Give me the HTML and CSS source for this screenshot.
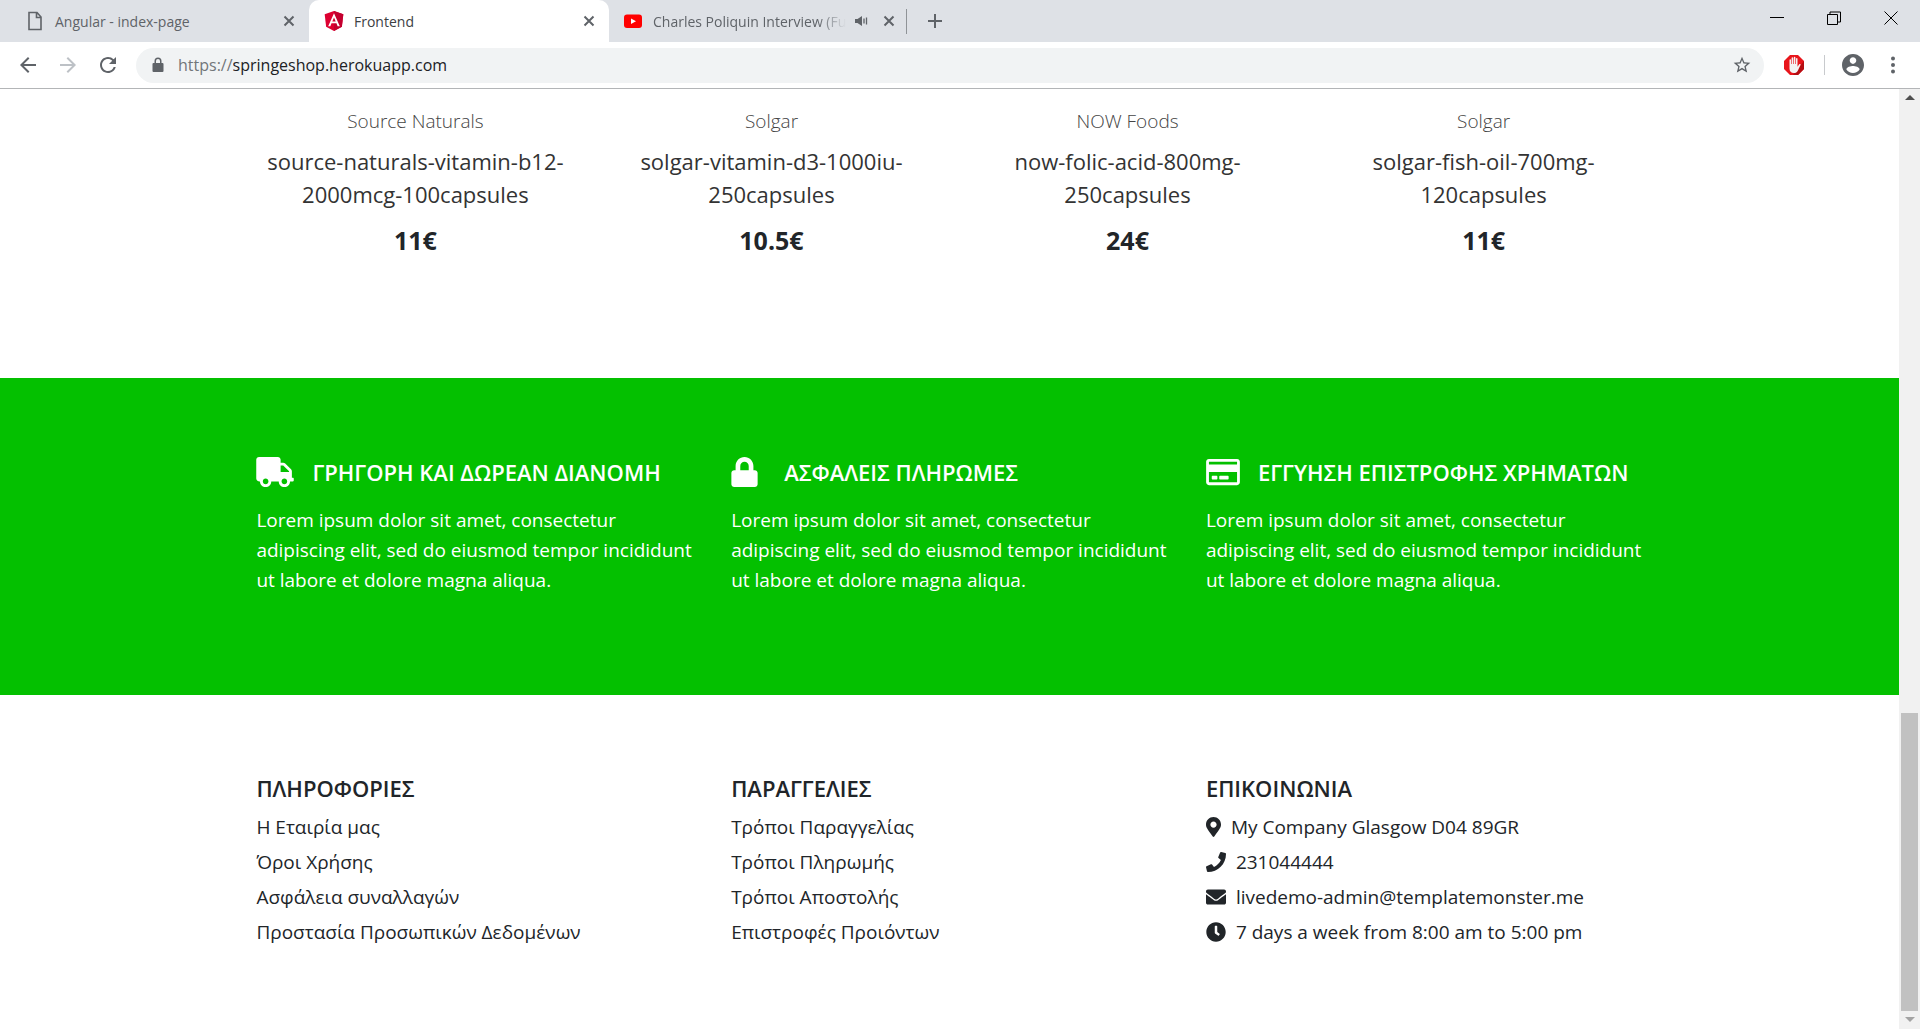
FILE: index.html
```html
<!DOCTYPE html>
<html lang="el">
<head>
<meta charset="utf-8">
<meta name="viewport" content="width=device-width, initial-scale=1">
<title>Frontend</title>
<link rel="stylesheet" href="styles.css">
</head>
<body>
<header class="browser">
  <div class="tabstrip">
    <div class="tab tab-first">
      <svg class="favicon" viewBox="0 0 20 20" fill="none" stroke="#5f6368" stroke-width="1.6"><path d="M4 1.5h8l4 4.5v12.500H4zM11.500 1.500V6.500H16"/></svg>
      <span class="tab-title">Angular - index-page</span>
      <button class="tab-close" aria-label="Close tab"><svg viewBox="0 0 12 12"><path d="M1.500 1.500l9 9M10.500 1.500l-9 9"/></svg></button>
    </div>
    <div class="tab tab-active">
      <svg class="favicon" viewBox="25 30 200 200"><path fill="#dd0031" d="M125 30 31.900 63.200l14.200 123.100L125 230l78.900-43.700 14.200-123.100z"/><path fill="#c3002f" d="M125 30v200l78.900-43.700 14.200-123.100z"/><path fill="#fff" d="M125 52.100L66.800 182.600h21.700l11.700-29.200h49.400l11.700 29.200H183L125 52.100zm17 83.300h-34l17-40.900 17 40.900z"/></svg>
      <span class="tab-title">Frontend</span>
      <button class="tab-close" aria-label="Close tab"><svg viewBox="0 0 12 12"><path d="M1.500 1.500l9 9M10.500 1.500l-9 9"/></svg></button>
    </div>
    <div class="tab tab-last">
      <svg class="favicon" viewBox="0 0 20 20"><rect x="1" y="3.500" width="18" height="13.500" rx="3" fill="#f00"/><path fill="#fff" d="M8 7.500l5 2.700-5 2.800z"/></svg>
      <span class="tab-title fade">Charles Poliquin Interview (Fu</span>
      <svg class="speaker" viewBox="0 0 14 14"><path fill="#5f6368" d="M1 5h2.500L8 2v10L3.500 9H1z"/><path stroke="#5f6368" stroke-width="1.300" d="M10 4.500v5M12.500 3.500v7"/></svg>
      <button class="tab-close" aria-label="Close tab"><svg viewBox="0 0 12 12"><path d="M1.500 1.500l9 9M10.500 1.500l-9 9"/></svg></button>
    </div>
    <button class="new-tab" aria-label="New tab"><svg viewBox="0 0 16 16"><path d="M8 1v14M1 8h14"/></svg></button>
    <div class="window-controls">
      <button aria-label="Minimize"><svg viewBox="0 0 14 14"><path d="M0 6.500h14"/></svg></button>
      <button aria-label="Restore"><svg viewBox="0 0 14 14"><path d="M.5 3.500h10v10H.5zM3 3.500V1h10.500v10H11"/></svg></button>
      <button aria-label="Close"><svg viewBox="0 0 14 14"><path d="M.5 .5l13 13M13.500 .5l-13 13"/></svg></button>
    </div>
  </div>
  <div class="toolbar">
    <button class="tool" aria-label="Back"><svg viewBox="0 0 24 24"><path d="M20 11H7.830l5.590-5.590L12 4l-8 8 8 8 1.410-1.410L7.830 13H20v-2z"/></svg></button>
    <button class="tool tool-disabled" aria-label="Forward" disabled><svg viewBox="0 0 24 24"><path d="M12 4l-1.410 1.410L16.170 11H4v2h12.170l-5.580 5.590L12 20l8-8z"/></svg></button>
    <button class="tool" aria-label="Reload"><svg viewBox="0 0 24 24"><path d="M17.650 6.350A7.958 7.958 0 0 0 12 4c-4.420 0-7.990 3.580-7.990 8s3.570 8 7.990 8c3.730 0 6.840-2.550 7.730-6h-2.080A5.990 5.990 0 0 1 12 18c-3.310 0-6-2.690-6-6s2.690-6 6-6c1.660 0 3.140.690 4.220 1.780L13 11h7V4l-2.350 2.350z"/></svg></button>
    <div class="omnibox">
      <svg class="url-lock" viewBox="0 0 12 16"><path fill="#5f6368" d="M1.500 6H2.500V4a3.500 3.500 0 0 1 7 0v2h1a1 1 0 0 1 1 1v7a1 1 0 0 1-1 1h-9a1 1 0 0 1-1-1V7a1 1 0 0 1 1-1zM4 6h4V4a2 2 0 0 0-4 0z"/></svg>
      <label class="scheme" for="url">https://</label>
      <input class="url" id="url" type="text" value="springeshop.herokuapp.com">
      <button class="star" aria-label="Bookmark"><svg viewBox="0 0 24 24"><path fill="#5f6368" d="M22 9.240l-7.190-.620L12 2 9.190 8.630 2 9.240l5.460 4.730L5.820 21 12 17.270 18.180 21l-1.630-7.030L22 9.240zM12 15.400l-3.760 2.270 1-4.280-3.320-2.880 4.380-.380L12 6.100l1.710 4.040 4.380.380-3.320 2.880 1 4.280L12 15.400z"/></svg></button>
    </div>
    <button class="extension" aria-label="Ad blocker"><svg viewBox="0 0 20 20"><path fill="#e8151b" d="M6 0h8l6 6v8l-6 6H6l-6-6V6z"/><path fill="#b50d12" d="M20 6v8l-6 6H9l7-9z"/><path fill="#f4f4f4" d="M5.500 5c0-1 1.500-1 1.500 0v4h.6V3c0-1 1.600-1 1.600 0v6h.6V2.500c0-1 1.600-1 1.600 0V9h.6V3.800c0-1 1.500-1 1.500 0v8l1.700-2.500c.7-.8 1.700-.2 1.300.7l-2.600 5.500c-1 2-2.200 2.500-4 2.500-2.800 0-4.400-1.600-4.400-4.500z"/></svg></button>
    <span class="divider"></span>
    <button class="avatar" aria-label="Profile"><svg viewBox="2 2 20 20"><path fill="#5f6368" d="M12 2C6.480 2 2 6.480 2 12s4.480 10 10 10 10-4.480 10-10S17.520 2 12 2zm0 3c1.660 0 3 1.340 3 3s-1.340 3-3 3-3-1.340-3-3 1.340-3 3-3zm0 14.200c-2.500 0-4.710-1.280-6-3.220.030-1.990 4-3.080 6-3.080 1.990 0 5.970 1.090 6 3.080-1.290 1.940-3.500 3.220-6 3.220z"/></svg></button>
    <button class="menu" aria-label="Menu"><svg viewBox="0 0 4 18"><g fill="#5f6368"><circle cx="2" cy="2.500" r="2"/><circle cx="2" cy="9" r="2"/><circle cx="2" cy="15.500" r="2"/></g></svg></button>
  </div>
</header>

<div class="viewport">
  <div class="page">
    <main>
      <section class="products container">
        <article class="product"><p class="brand">Source Naturals</p><h3 class="name">source-naturals-vitamin-b12-<br>2000mcg-100capsules</h3><p class="price">11€</p></article>
        <article class="product"><p class="brand">Solgar</p><h3 class="name">solgar-vitamin-d3-1000iu-<br>250capsules</h3><p class="price">10.5€</p></article>
        <article class="product"><p class="brand">NOW Foods</p><h3 class="name">now-folic-acid-800mg-<br>250capsules</h3><p class="price">24€</p></article>
        <article class="product"><p class="brand">Solgar</p><h3 class="name">solgar-fish-oil-700mg-<br>120capsules</h3><p class="price">11€</p></article>
      </section>
      <section class="benefits">
        <div class="container columns">
          <article class="column">
            <h4 class="benefit-title"><svg class="icon-truck" viewBox="0 0 640 512"><path d="M624 352h-16V243.900c0-12.700-5.100-24.900-14.100-33.900L494 110.100c-9-9-21.200-14.100-33.900-14.100H416V48c0-26.500-21.500-48-48-48H48C21.500 0 0 21.500 0 48v320c0 26.500 21.500 48 48 48h16c0 53 43 96 96 96s96-43 96-96h128c0 53 43 96 96 96s96-43 96-96h48c8.800 0 16-7.200 16-16v-32c0-8.800-7.200-16-16-16zM160 464c-26.500 0-48-21.500-48-48s21.500-48 48-48 48 21.500 48 48-21.500 48-48 48zm320 0c-26.500 0-48-21.500-48-48s21.500-48 48-48 48 21.500 48 48-21.500 48-48 48zm80-208H416V144h44.100l99.900 99.900V256z"/></svg>ΓΡΗΓΟΡΗ ΚΑΙ ΔΩΡΕΑΝ ΔΙΑΝΟΜΗ</h4>
            <p class="benefit-text">Lorem ipsum dolor sit amet, consectetur<br>adipiscing elit, sed do eiusmod tempor incididunt<br>ut labore et dolore magna aliqua.</p>
          </article>
          <article class="column">
            <h4 class="benefit-title"><svg class="icon-lock" viewBox="0 0 448 512"><path d="M400 224h-24v-72C376 68.200 307.800 0 224 0S72 68.200 72 152v72H48c-26.500 0-48 21.500-48 48v192c0 26.500 21.500 48 48 48h352c26.500 0 48-21.500 48-48V272c0-26.500-21.500-48-48-48zm-104 0H152v-72c0-39.700 32.300-72 72-72s72 32.300 72 72v72z"/></svg>ΑΣΦΑΛΕΙΣ ΠΛΗΡΩΜΕΣ</h4>
            <p class="benefit-text">Lorem ipsum dolor sit amet, consectetur<br>adipiscing elit, sed do eiusmod tempor incididunt<br>ut labore et dolore magna aliqua.</p>
          </article>
          <article class="column">
            <h4 class="benefit-title"><svg class="icon-card" viewBox="0 0 576 512"><path d="M527.900 32H48.100C21.500 32 0 53.500 0 80v352c0 26.500 21.500 48 48.100 48h479.800c26.600 0 48.100-21.500 48.100-48V80c0-26.500-21.500-48-48.100-48zM54.100 80h467.800c3.300 0 6 2.700 6 6v42H48.100V86c0-3.300 2.700-6 6-6zm467.800 352H54.100c-3.300 0-6-2.700-6-6V256h479.800v170c0 3.300-2.700 6-6 6zM192 332v40c0 6.600-5.400 12-12 12h-72c-6.600 0-12-5.400-12-12v-40c0-6.600 5.400-12 12-12h72c6.600 0 12 5.400 12 12zm192 0v40c0 6.600-5.400 12-12 12H236c-6.600 0-12-5.400-12-12v-40c0-6.600 5.400-12 12-12h136c6.600 0 12 5.400 12 12z"/></svg>ΕΓΓΥΗΣΗ ΕΠΙΣΤΡΟΦΗΣ ΧΡΗΜΑΤΩΝ</h4>
            <p class="benefit-text">Lorem ipsum dolor sit amet, consectetur<br>adipiscing elit, sed do eiusmod tempor incididunt<br>ut labore et dolore magna aliqua.</p>
          </article>
        </div>
      </section>
    </main>
    <footer class="footer container columns">
      <nav class="column">
        <h4 class="footer-title">ΠΛΗΡΟΦΟΡΙΕΣ</h4>
        <ul class="links">
          <li><a href="#">Η Εταιρία μας</a></li>
          <li><a href="#">Όροι Χρήσης</a></li>
          <li><a href="#">Ασφάλεια συναλλαγών</a></li>
          <li><a href="#">Προστασία Προσωπικών Δεδομένων</a></li>
        </ul>
      </nav>
      <nav class="column">
        <h4 class="footer-title">ΠΑΡΑΓΓΕΛΙΕΣ</h4>
        <ul class="links">
          <li><a href="#">Τρόποι Παραγγελίας</a></li>
          <li><a href="#">Τρόποι Πληρωμής</a></li>
          <li><a href="#">Τρόποι Αποστολής</a></li>
          <li><a href="#">Επιστροφές Προιόντων</a></li>
        </ul>
      </nav>
      <div class="column">
        <h4 class="footer-title">ΕΠΙΚΟΙΝΩΝΙΑ</h4>
        <ul class="links">
          <li><svg class="icon-pin" viewBox="0 0 384 512"><path d="M172.268 501.670C26.970 291.031 0 269.413 0 192 0 85.961 85.961 0 192 0s192 85.961 192 192c0 77.413-26.970 99.031-172.268 309.670-9.535 13.774-29.930 13.773-39.464 0zM192 272c44.183 0 80-35.817 80-80s-35.817-80-80-80-80 35.817-80 80 35.817 80 80 80z"/></svg>My Company Glasgow D04 89GR</li>
          <li><svg class="icon-contact" viewBox="0 0 512 512"><path d="M493.400 24.600l-104-24c-11.300-2.600-22.900 3.300-27.500 13.900l-48 112c-4.200 9.800-1.400 21.300 6.900 28l60.600 49.600c-36 76.700-98.900 140.500-177.200 177.200l-49.600-60.600c-6.800-8.300-18.200-11.100-28-6.900l-112 48C3.900 366.500-2 378.100.6 389.400l24 104C27.100 504.200 36.700 512 48 512c256.100 0 464-207.500 464-464 0-11.200-7.700-20.900-18.600-23.400z"/></svg>231044444</li>
          <li><svg class="icon-contact" viewBox="0 0 512 512"><path d="M502.300 190.800c3.900-3.100 9.700-.2 9.700 4.700V400c0 26.500-21.500 48-48 48H48c-26.500 0-48-21.500-48-48V195.600c0-5 5.700-7.800 9.700-4.700 22.400 17.400 52.100 39.500 154.100 113.600 21.100 15.400 56.700 47.800 92.200 47.600 35.700.3 72-32.800 92.300-47.600 102-74.100 131.600-96.300 154-113.700zM256 320c23.200.4 56.600-29.200 73.400-41.400 132.700-96.300 142.800-104.700 173.400-128.700 5.800-4.500 9.200-11.500 9.200-18.900v-19c0-26.500-21.500-48-48-48H48c-26.500 0-48 21.500-48 48v19c0 7.400 3.400 14.300 9.200 18.900 30.600 23.900 40.700 32.400 173.400 128.700 16.800 12.200 50.200 41.800 73.400 41.400z"/></svg><a href="#">livedemo-admin@templatemonster.me</a></li>
          <li><svg class="icon-contact" viewBox="0 0 512 512"><path d="M256 8C119 8 8 119 8 256s111 248 248 248 248-111 248-248S393 8 256 8zm92.490 313l-20 25a16 16 0 0 1-22.490 2.500l-67-49.720a40 40 0 0 1-15-31.230V112a16 16 0 0 1 16-16h32a16 16 0 0 1 16 16v144l58 42.500a16 16 0 0 1 2.490 22.500z"/></svg>7 days a week from 8:00 am to 5:00 pm</li>
        </ul>
      </div>
    </footer>
  </div>
  <div class="scrollbar">
    <button class="scroll-arrow" aria-label="Scroll up"><svg viewBox="0 0 10 6"><path fill="#505050" d="M5 0l5 5H0z"/></svg></button>
    <div class="scroll-track"><div class="scroll-thumb"></div></div>
    <button class="scroll-arrow" aria-label="Scroll down"><svg viewBox="0 0 10 6"><path fill="#a3a3a3" d="M0 0h10L5 5z"/></svg></button>
  </div>
</div>
</body>
</html>
```
FILE: styles.css
```css
* { box-sizing: border-box; }
body {
  margin: 0;
  min-height: 100vh;
  display: flex;
  flex-direction: column;
  background: #fff;
  color: #212529;
  font-family: "Open Sans", "Noto Sans", sans-serif;
}
p, h3, h4, ul { margin: 0; padding: 0; }
ul { list-style: none; }
a { color: inherit; text-decoration: none; }
svg { display: block; flex: none; }
button {
  display: flex;
  align-items: center;
  justify-content: center;
  flex: none;
  margin: 0;
  padding: 0;
  border: 0;
  background: none;
}

/* Browser frame */
.browser { border-bottom: 1px solid #b3b5b7; }
.tabstrip {
  display: flex;
  height: 42px;
  background: #dee1e6;
}
.tab {
  display: flex;
  align-items: center;
  color: #5f6368;
  font-size: 14px;
  padding: 0 11px;
}
.tab-first { width: 309px; padding-left: 25px; }
.tab-active {
  width: 300px;
  padding-left: 15px;
  background: #fff;
  border-radius: 10px 10px 0 0;
  color: #3c4043;
}
.tab-last { width: 298px; padding-left: 14px; position: relative; }
.tab-last::after {
  content: "";
  position: absolute;
  right: 0;
  top: 9px;
  width: 1px;
  height: 25px;
  background: #8f9397;
}
.favicon { width: 20px; height: 20px; margin-right: 10px; }
.tab-title { flex: 1; white-space: nowrap; }
.fade { mask-image: linear-gradient(to right, #000 85%, transparent); }
.speaker { width: 14px; height: 14px; margin: 0 12px 0 8px; }
.tab-close { width: 18px; height: 18px; }
.tab-close svg { width: 12px; height: 12px; stroke: #5f6368; stroke-width: 2; }
.new-tab { width: 56px; }
.new-tab svg { width: 16px; height: 16px; stroke: #5f6368; stroke-width: 2; }
.window-controls { display: flex; margin-left: auto; padding-right: 1px; height: 36px; }
.window-controls button { width: 57px; }
.window-controls svg { width: 14px; height: 14px; fill: none; stroke: #000; }

.toolbar {
  display: flex;
  align-items: center;
  height: 46px;
  padding: 0 16px 0 8px;
}
.tool { width: 40px; height: 40px; }
.tool svg { width: 24px; height: 24px; fill: #5f6368; }
.tool-disabled svg { fill: #bdc1c6; }
.omnibox {
  display: flex;
  align-items: center;
  flex: 1;
  height: 35px;
  margin-left: 8px;
  padding: 0 12px 0 16px;
  border-radius: 18px;
  background: #f1f3f4;
  font-size: 16px;
}
.url-lock { width: 12px; height: 16px; margin-right: 14px; }
.scheme { color: #72767a; }
.url {
  flex: 1;
  min-width: 0;
  padding: 0;
  border: 0;
  outline: 0;
  background: none;
  color: #202124;
  font: inherit;
}
.star svg { width: 20px; height: 20px; }
.extension { margin-left: 20px; }
.extension svg { width: 20px; height: 20px; }
.divider { width: 1px; height: 20px; margin: 0 17px 0 20px; background: #c8cacd; }
.avatar svg { width: 22px; height: 22px; }
.menu { width: 22px; margin-left: 18px; }
.menu svg { width: 4px; height: 18px; }

/* Page */
.viewport { display: flex; flex: 1; }
.page { flex: 1; min-width: 0; }
.container { width: 75%; margin: 0 auto; }
.products {
  display: grid;
  grid-template-columns: repeat(4, 1fr);
  padding: 16px 0 117px;
  text-align: center;
}
.brand { font-size: 19px; font-weight: 300; line-height: 32px; color: #444; }
.name { margin-top: 8px; font-size: 22px; font-weight: 400; line-height: 33px; color: #333; }
.price { margin-top: 8px; font-size: 25px; font-weight: 700; line-height: 42px; }

.benefits { padding: 73px 0 100px; background: #04c000; color: #fff; }
.columns { display: grid; grid-template-columns: repeat(3, 1fr); }
.column { padding-left: 19px; white-space: nowrap; }
.benefit-title {
  display: flex;
  align-items: center;
  height: 42px;
  font-size: 22px;
  font-weight: 600;
}
.benefit-title svg { height: 30px; fill: #fff; }
.icon-truck { width: 38px; margin-right: 18px; }
.icon-lock { width: 27px; margin-right: 26px; }
.icon-card { width: 34px; margin-right: 18px; }
.benefit-text { margin-top: 12px; font-size: 19px; line-height: 30px; }

.footer { padding: 77px 0 66px; }
.footer-title { font-size: 22px; font-weight: 600; line-height: 32px; margin-bottom: 5px; }
.links li { display: flex; align-items: center; height: 35px; font-size: 19px; }
.links svg { height: 20px; margin-right: 10px; fill: #212529; }
.icon-pin { width: 15px; }
.icon-contact { width: 20px; }

/* Scrollbar */
.scrollbar {
  display: flex;
  flex-direction: column;
  width: 21px;
  padding: 0 2px;
  background: #f1f1f1;
}
.scroll-arrow { height: 18px; }
.scroll-arrow svg { width: 10px; height: 6px; }
.scroll-track { display: flex; flex: 1; align-items: flex-end; }
.scroll-thumb { width: 17px; height: 33%; background: #c1c1c1; }
```
